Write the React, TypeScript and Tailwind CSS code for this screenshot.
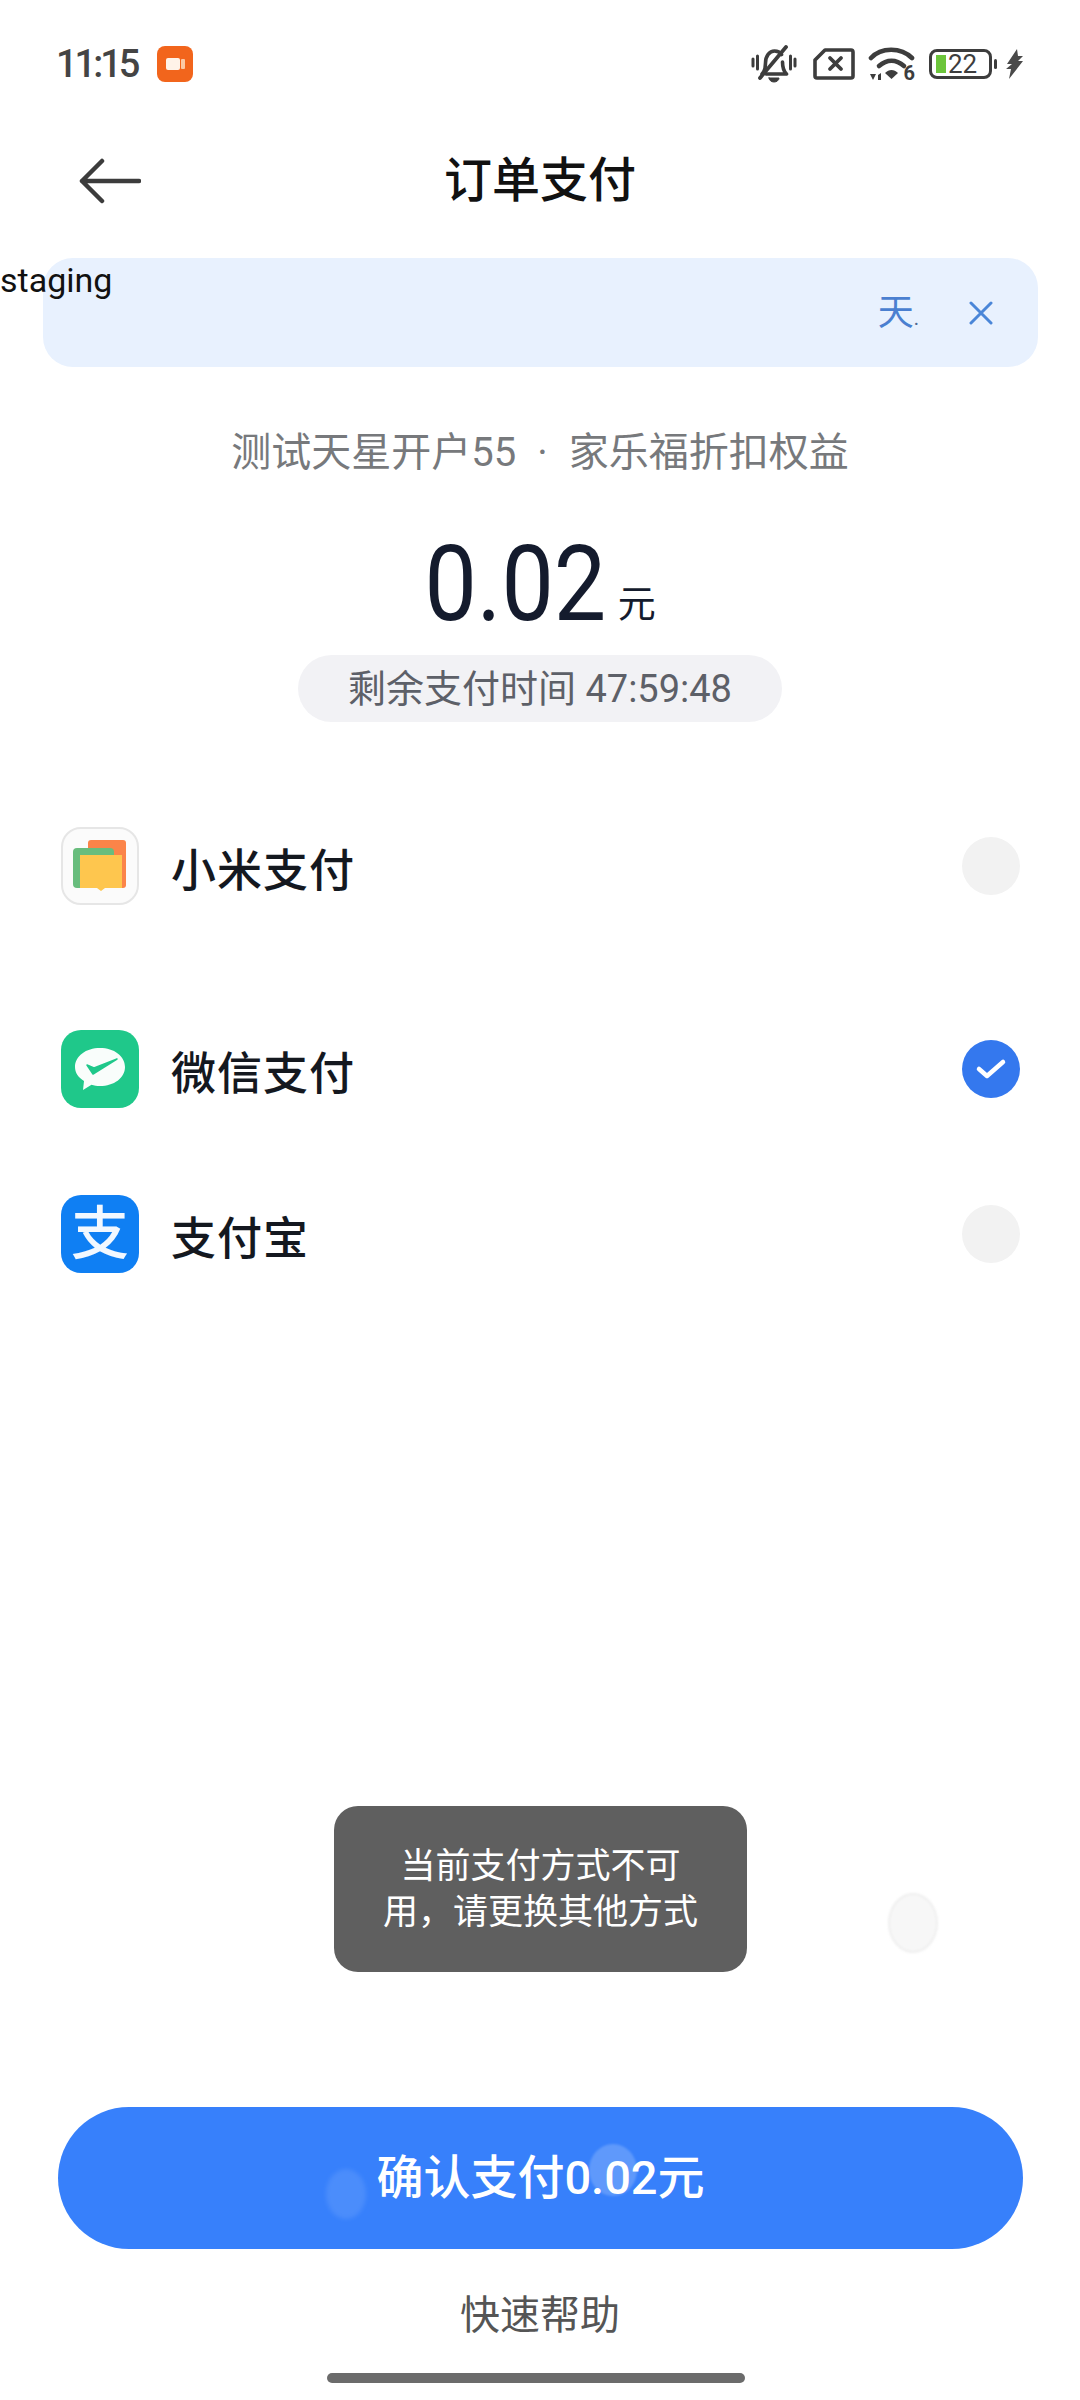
import type { ReactNode } from "react";

function MuteBell() {
  return (
    <svg width="46" height="38" viewBox="0 0 46 38" fill="none" stroke="#3d3d3d" strokeLinecap="round" strokeLinejoin="round">
      <path d="M2 14v7M6.500 11v13M39.500 11v13M44 14v7" strokeWidth="3" />
      <path d="M11 29c3-3 3.500-6 3.500-11 0-7 4-12 9-12 3 0 5.500 1.200 7 3.500M31.500 17c0 6 1 9 4 12H15" strokeWidth="3.600" />
      <path d="M9 33L35 2" strokeWidth="3.800" />
      <path d="M18 33h10a5 4 0 0 1-10 0z" fill="#3d3d3d" strokeWidth="1" />
    </svg>
  );
}

function SimOff() {
  return (
    <svg width="42" height="34" viewBox="0 0 42 34" fill="none" stroke="#3d3d3d" strokeLinecap="round" strokeLinejoin="round">
      <path d="M12 3h26a2 2 0 0 1 2 2v24a2 2 0 0 1-2 2H4a2 2 0 0 1-2-2V13z" strokeWidth="3.600" />
      <path d="M17 11l11 11M28 11L17 22" strokeWidth="3.800" />
    </svg>
  );
}

function WifiSix() {
  return (
    <div className="relative h-[36px] w-[48px]">
      <svg width="48" height="36" viewBox="0 0 48 36" fill="none">
        <g stroke="#3d3d3d" strokeWidth="4.600" strokeLinecap="round">
          <path d="M3 12C13 1 33 1 44 12" />
          <path d="M11 20c8-7 17-7 25 0" />
        </g>
        <path d="M17 27c4-4 9-4 13 0l-6.500 6z" fill="#3d3d3d" />
        <path d="M2 28h6l-3 6zM10 34h3v-7l-3 2z" fill="#3d3d3d" />
      </svg>
      <span className="absolute bottom-[-3px] right-[1px] text-[20px] font-bold leading-[24px] text-[#3d3d3d]">6</span>
    </div>
  );
}

function Battery() {
  return (
    <div className="flex items-center gap-[2px]">
      <div className="relative flex h-[30px] w-[63px] items-center rounded-[8px] border-[3px] border-[#3d3d3d] pl-[4px]">
        <div className="h-[18px] w-[10px] bg-[#6cc53b]" />
        <span className="ml-[2px] text-[26px] leading-none text-[#3d3d3d]">22</span>
      </div>
      <div className="h-[10px] w-[3px] rounded-full bg-[#3d3d3d]" />
    </div>
  );
}

function Bolt() {
  return (
    <svg width="17" height="30" viewBox="0 0 17 30">
      <path d="M11 0L1 15l5 0L0 20l5 0-2 10L17 12l-5 0 5-5-5 0z" fill="#4a4a4a" />
    </svg>
  );
}

function BackArrow() {
  return (
    <svg width="62" height="46" viewBox="0 0 62 46" fill="none" stroke="#3c3c3c" strokeWidth="4.500" strokeLinecap="round" strokeLinejoin="round">
      <path d="M60 23H3M23 3L3 23l20 20" />
    </svg>
  );
}

function MiPayIcon() {
  return (
    <div className="h-[78px] w-[78px] rounded-[20px] border-2 border-[#e6e6e6] bg-[#fbfbfb]">
      <svg width="74" height="74" viewBox="0 0 74 74">
        <rect x="25" y="11" width="38" height="48" rx="3" fill="#fb8449" />
        <rect x="10" y="19" width="41" height="40" rx="4" fill="#68bd7d" />
        <path d="M17 26h42v33H42l-4 3-4-3H17z" fill="#fec64e" />
      </svg>
    </div>
  );
}

function WechatPayIcon() {
  return (
    <div className="h-[78px] w-[78px] rounded-[20px] bg-[#1fc88a]">
      <svg width="78" height="78" viewBox="0 0 78 78">
        <path d="M14 37c0-11 11-19 25-19s25 8 25 19-11 19-25 19c-3 0-6-.4-8.500-1.200L22 60l1-9c-6-3.500-9-8.500-9-14z" fill="#f9fdfb" />
        <path d="M26 35l6 9 24-15-23 9-7-3z" fill="#1fc88a" stroke="#1fc88a" strokeWidth="1.500" strokeLinejoin="round" />
      </svg>
    </div>
  );
}

function AlipayIcon() {
  return (
    <div className="flex h-[78px] w-[78px] items-center justify-center rounded-[20px] bg-[#0f7ff3]">
      <span className="text-[58px] font-medium leading-none text-[#f2f8ff]">支</span>
    </div>
  );
}

function Radio({ checked = false }: { checked?: boolean }) {
  if (checked) {
    return (
      <div className="flex h-[58px] w-[58px] items-center justify-center rounded-full bg-[#3478ee]">
        <svg width="32" height="24" viewBox="0 0 32 24" fill="none" stroke="#fff" strokeWidth="4.500" strokeLinecap="round" strokeLinejoin="round">
          <path d="M4 12l8 7L28 5" />
        </svg>
      </div>
    );
  }
  return <div className="h-[58px] w-[58px] rounded-full bg-[#f2f2f2]" />;
}

function PayRow({ icon, label, checked, className }: { icon: ReactNode; label: string; checked?: boolean; className: string }) {
  return (
    <div className={`flex h-[78px] items-center pl-[61px] pr-[60px] ${className}`}>
      {icon}
      <span className="ml-[32px] mt-[12px] text-[45px] font-medium tracking-[1px] text-[#14181f]">{label}</span>
      <div className="ml-auto">
        <Radio checked={checked} />
      </div>
    </div>
  );
}

export default function App() {
  return (
    <div className="relative flex h-[2400px] w-[1080px] flex-col overflow-hidden bg-white font-['Roboto','Noto_Sans_CJK_SC',sans-serif]">
      {/* status bar */}
      <div className="flex h-[128px] items-center pl-[56px] pr-[57px]">
        <span className="text-[38px] font-medium tracking-[-3px] text-[#444]">11:15</span>
        <div className="ml-[20px] flex h-[36px] w-[36px] items-center justify-center gap-[1px] rounded-[8px] bg-[#f2651c]">
          <div className="h-[12px] w-[14px] rounded-[2px] bg-[#fff3e8]" />
          <div className="h-[10px] w-[4px] rounded-[1px] bg-[#fbc9a4]" />
        </div>
        <div className="ml-auto flex items-center">
          <MuteBell />
          <div className="ml-[16px]">
            <SimOff />
          </div>
          <div className="ml-[13px]">
            <WifiSix />
          </div>
          <div className="ml-[13px]">
            <Battery />
          </div>
          <div className="ml-[9px]">
            <Bolt />
          </div>
        </div>
      </div>

      {/* header */}
      <div className="grid h-[104px] grid-cols-[1fr_auto_1fr] items-center pl-[79px] pt-[2px]">
        <BackArrow />
        <h1 className="ml-[-79px] text-[48px] font-medium text-[#111]">订单支付</h1>
      </div>

      {/* notice banner */}
      <div className="ml-[43px] mt-[26px] flex h-[109px] w-[995px] items-center rounded-[30px] bg-[#e8f1fe]">
        <span className="ml-auto text-[36px] text-[#4a7fd0]">天</span>
        <span className="mt-[10px] text-[20px] leading-[28px] text-[#4d6a90]">.</span>
        <svg className="ml-[50px] mr-[45px]" width="24" height="24" viewBox="0 0 24 24" fill="none" stroke="#4a86d8" strokeWidth="3" strokeLinecap="round">
          <path d="M2 2l20 20M22 2L2 22" />
        </svg>
      </div>

      {/* order info */}
      <p className="mt-[56px] h-[60px] text-center text-[40px] leading-[60px] text-[#77797c]">
        测试天星开户55
        <span className="mx-[21px]">·</span>
        家乐福折扣权益
      </p>
      <div className="mt-[51px] flex h-[100px] items-end justify-center">
        <span className="-mx-[12px] inline-block scale-x-[0.88] text-[106px] leading-[100px] text-[#141b2d]">0.02</span>
        <span className="mb-[8px] ml-[11px] text-[38px] leading-[44px] text-[#141b2d]">元</span>
      </div>
      <div className="mx-auto mt-[21px] flex h-[67px] w-[484px] items-center justify-center rounded-full bg-[#f2f2f5] pt-[2px] text-[38px] text-[#5d6068]">
        剩余支付时间 47:59:48
      </div>

      {/* payment methods */}
      <PayRow className="mt-[105px]" icon={<MiPayIcon />} label="小米支付" />
      <PayRow className="mt-[125px]" icon={<WechatPayIcon />} label="微信支付" checked />
      <PayRow className="mt-[87px]" icon={<AlipayIcon />} label="支付宝" />

      {/* bottom action */}
      <button className="relative ml-[58px] mt-auto flex h-[142px] w-[965px] items-center justify-center rounded-full bg-[#3780fb] text-[47px] font-medium text-white">
        确认支付0.02元
        <span className="absolute left-[268px] top-[62px] h-[50px] w-[40px] rounded-[50%] bg-white/10 blur-[2px]" />
        <span className="absolute left-[531px] top-[37px] h-[52px] w-[48px] rounded-[50%] bg-white/20 blur-[1px]" />
      </button>
      <div className="mt-[39px] text-center text-[40px] leading-[56px] text-[#555]">快速帮助</div>
      <div className="mb-[17px] ml-[327px] mt-[29px] h-[10px] w-[418px] rounded-full bg-[#6b6b6b]" />

      {/* overlays */}
      <span className="absolute left-0 top-[258px] text-[34px] leading-[44px] text-[#111]">staging</span>
      <div className="absolute left-[334px] top-[1806px] flex h-[166px] w-[413px] items-center rounded-[24px] bg-[#5f5f5f] px-[47px] pt-[2px] text-center text-[35px] leading-[46px] text-white">
        当前支付方式不可用，请更换其他方式
      </div>
      <div className="absolute left-[888px] top-[1893px] h-[60px] w-[50px] rounded-[50%] border-2 border-[#efefef] bg-[#f7f7f7] blur-[1px]" />
    </div>
  );
}
